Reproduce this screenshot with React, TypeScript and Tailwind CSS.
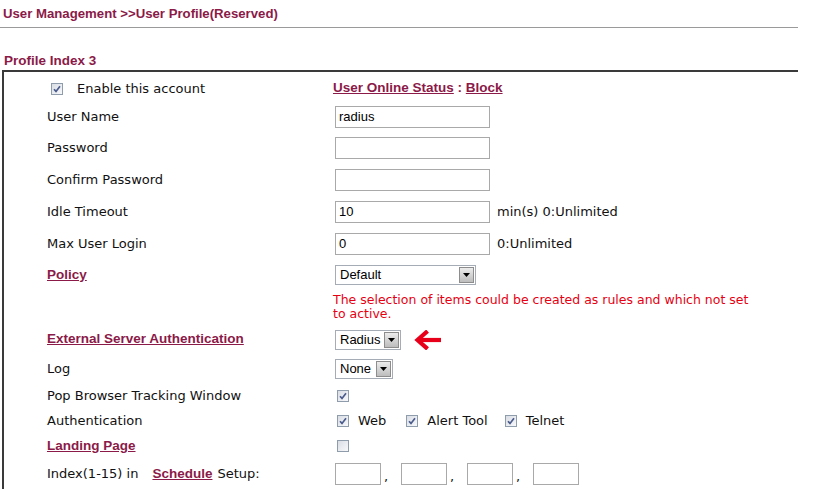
const maroon = 'text-[#8b1a48]'

function Check({ checked = true }: { checked?: boolean }) {
  return (
    <span className="inline-flex h-[12px] w-[12px] shrink-0 items-center justify-center border border-[#8f9cab] bg-gradient-to-br from-[#d9dee5] to-[#f7f8fa]">
      {checked && (
        <svg width="8" height="8" viewBox="0 0 8 8">
          <path d="M1 4.2 L3 6.4 L7 1.2" fill="none" stroke="#4b5b8c" strokeWidth="1.7" />
        </svg>
      )}
    </span>
  )
}

function TextBox({ value = '', w = 'w-[155px]' }: { value?: string; w?: string }) {
  return (
    <div
      className={`${w} ml-[2px] flex h-[22px] items-center border border-[#a9a9a9] bg-white px-[3px] font-['Liberation_Sans',Arial,sans-serif] text-[13px] text-black`}
    >
      {value}
    </div>
  )
}

function Select({ value, w }: { value: string; w: string }) {
  return (
    <div
      className={`${w} ml-[2px] flex h-[20px] items-center justify-between border border-[#a5acb5] bg-white pl-[4px] pr-[1px] font-['Liberation_Sans',Arial,sans-serif] text-[13px] text-black`}
    >
      <span>{value}</span>
      <span className="flex h-[16px] w-[15px] items-center justify-center border border-[#8d8d8d] bg-gradient-to-b from-[#ececec] to-[#bdbdbd]">
        <svg width="7" height="4" viewBox="0 0 7 4">
          <path d="M0 0 H7 L3.5 4 Z" fill="#000" />
        </svg>
      </span>
    </div>
  )
}

function Row({ h, label, children }: { h: string; label: React.ReactNode; children?: React.ReactNode }) {
  return (
    <div className={`${h} flex items-center`}>
      <div className="w-[286px] shrink-0">{label}</div>
      <div className="flex flex-1 items-center">{children}</div>
    </div>
  )
}

function LinkLabel({ children }: { children: React.ReactNode }) {
  return (
    <span className={`font-['Liberation_Sans',Arial,sans-serif] text-[13.5px] font-bold underline ${maroon}`}>
      {children}
    </span>
  )
}

export default function App() {
  return (
    <div className="h-[490px] w-[819px] overflow-hidden bg-white font-['DejaVu_Sans',Verdana,sans-serif] text-[13px] text-[#111]">
      <div className="w-[798px]">
        <div
          className={`flex h-[28px] items-center border-b border-[#9a9a9a] pl-[3px] font-['Liberation_Sans',Arial,sans-serif] text-[13.2px] font-bold ${maroon}`}
        >
          User Management &gt;&gt;User Profile(Reserved)
        </div>
        <div
          className={`flex h-[42px] items-end pb-[1px] pl-[4px] font-['Liberation_Sans',Arial,sans-serif] text-[13.5px] font-bold leading-[16px] ${maroon}`}
        >
          Profile Index 3
        </div>

        <div className="ml-[2px] border-l-2 border-t-2 border-[#3a3a3a] pl-[43px] pt-[2px]">
          <Row
            h="h-[28px] pt-[1px]"
            label={
              <div className="flex items-center pl-[4px]">
                <Check />
                <span className="ml-[14px]">Enable this account</span>
              </div>
            }
          >
            <span className={`font-['Liberation_Sans',Arial,sans-serif] text-[13.5px] font-bold ${maroon}`}>
              <span className="underline">User Online Status</span>
              <span> : </span>
              <span className="underline">Block</span>
            </span>
          </Row>

          <Row h="h-[30px]" label="User Name">
            <TextBox value="radius" />
          </Row>
          <Row h="h-[32px]" label="Password">
            <TextBox />
          </Row>
          <Row h="h-[32px]" label="Confirm Password">
            <TextBox />
          </Row>
          <Row h="h-[32px]" label="Idle Timeout">
            <TextBox value="10" />
            <span className="ml-[7px]">min(s) 0:Unlimited</span>
          </Row>
          <Row h="h-[32px]" label="Max User Login">
            <TextBox value="0" />
            <span className="ml-[7px]">0:Unlimited</span>
          </Row>
          <Row h="h-[30px]" label={<LinkLabel>Policy</LinkLabel>}>
            <Select value="Default" w="w-[141px]" />
          </Row>

          <div className="flex h-[35px]">
            <div className="w-[286px] shrink-0" />
            <p className="w-[425px] pt-[3px] text-[12.5px] leading-[14px] text-[#e60012]">
              The selection of items could be created as rules and which not set to active.
            </p>
          </div>

          <Row h="h-[29px]" label={<LinkLabel>External Server Authentication</LinkLabel>}>
            <Select value="Radius" w="w-[66px]" />
            <svg className="ml-[13px]" width="28" height="20" viewBox="0 0 28 20">
              <path d="M27 10 H5" stroke="#e8001a" strokeWidth="4.2" fill="none" />
              <path d="M12 2.5 L3.5 10 L12 17.5" stroke="#e8001a" strokeWidth="4.2" fill="none" strokeLinecap="square" />
            </svg>
          </Row>
          <Row h="h-[30px]" label="Log">
            <Select value="None" w="w-[58px]" />
          </Row>
          <Row h="h-[24px]" label="Pop Browser Tracking Window">
            <span className="ml-[4px] flex">
              <Check />
            </span>
          </Row>
          <Row h="h-[25px]" label="Authentication">
            <span className="ml-[4px] flex items-center">
              <Check />
              <span className="ml-[9px]">Web</span>
              <span className="ml-[20px] flex">
                <Check />
              </span>
              <span className="ml-[9px]">Alert Tool</span>
              <span className="ml-[17px] flex">
                <Check />
              </span>
              <span className="ml-[9px]">Telnet</span>
            </span>
          </Row>
          <Row h="h-[26px]" label={<LinkLabel>Landing Page</LinkLabel>}>
            <span className="ml-[4px] flex">
              <Check checked={false} />
            </span>
          </Row>
          <Row
            h="h-[30px]"
            label={
              <span className="flex items-center">
                <span>Index(1-15) in</span>
                <span className="ml-[14px]">
                  <LinkLabel>Schedule</LinkLabel>
                </span>
                <span className="ml-[5px]">Setup:</span>
              </span>
            }
          >
            {[0, 1, 2, 3].map((i) => (
              <div key={i} className="flex items-center">
                <TextBox w="w-[46px]" />
                {i < 3 && <span className="w-[18px] pl-[3px] pt-[6px]">,</span>}
              </div>
            ))}
          </Row>
        </div>
      </div>
    </div>
  )
}
